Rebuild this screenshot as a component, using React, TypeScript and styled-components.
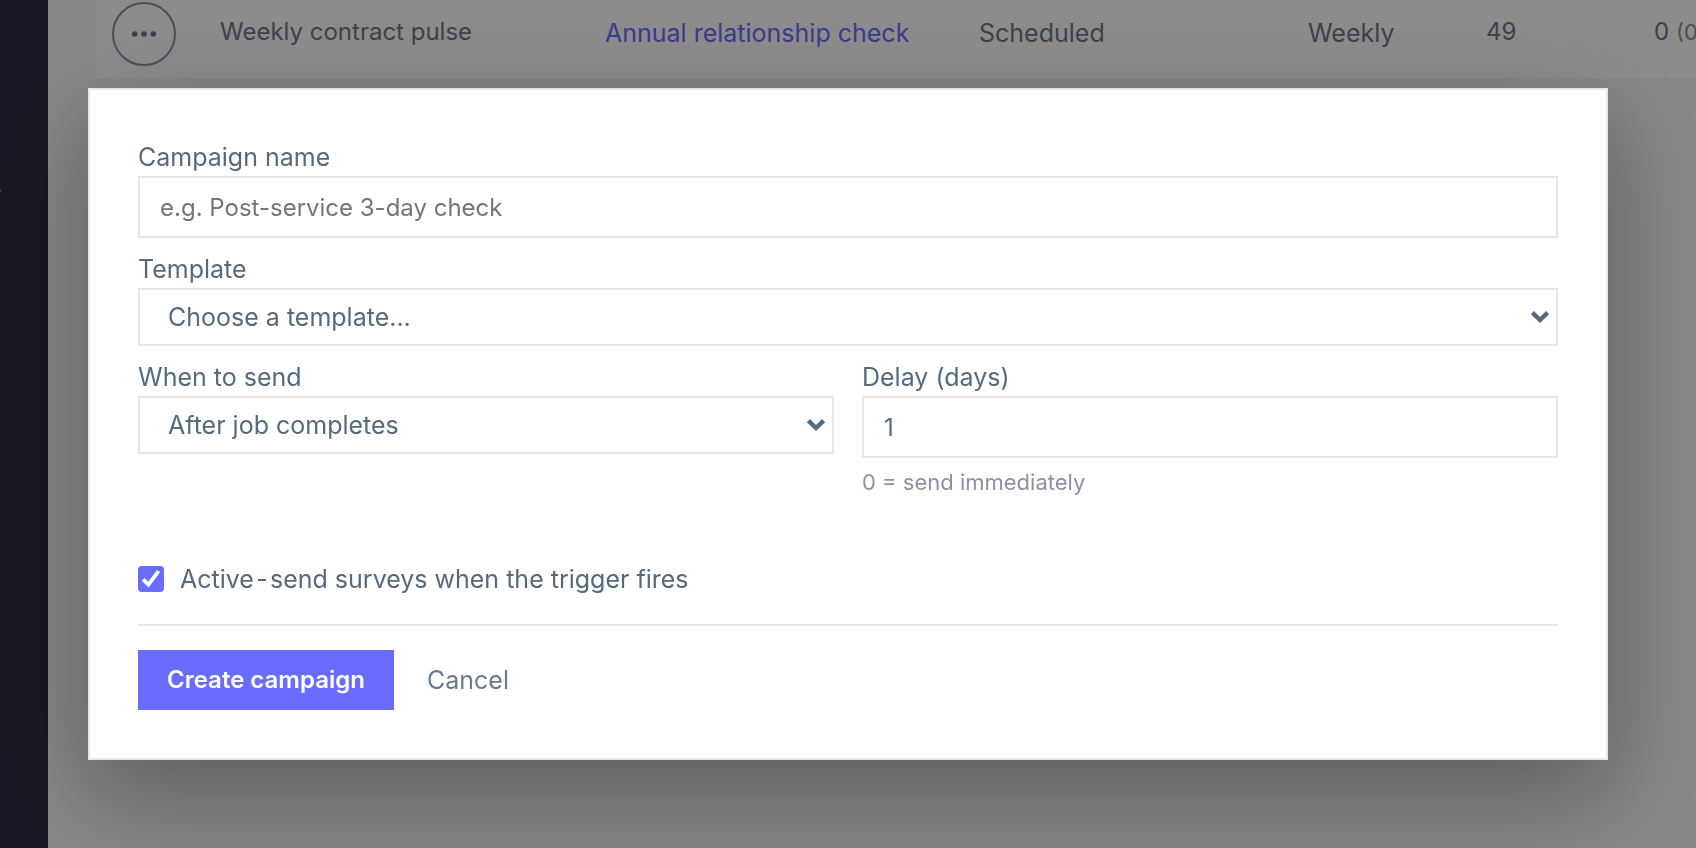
import React, { useState } from "react";
import styled, { createGlobalStyle } from "styled-components";

const GlobalStyle = createGlobalStyle`
  *, *::before, *::after { box-sizing: border-box; }
  body {
    margin: 0;
    overflow: hidden;
    background: #f5f5f9;
    color: #566a7f;
    font: 400 25px/38px Inter, "Liberation Sans", sans-serif;
  }
  button, input, select { font: inherit; color: inherit; }
`;

const Shell = styled.div`
  display: flex;
  min-height: 100vh;
`;

const Sidebar = styled.aside`
  flex: none;
  width: 48px;
  padding-top: 184px;
  overflow: hidden;
  background: #2b2c40;
  color: #7f8097;

  svg { display: block; margin-left: -12px; }
`;

const Main = styled.main`
  flex: 1;
  min-width: 0;
  padding-left: 48px;
  overflow: hidden;
`;

const CampaignTable = styled.table`
  width: 1800px;
  table-layout: fixed;
  border-collapse: collapse;
  background: #fff;
  color: #697a8d;
`;

const Cell = styled.td<{ $lift?: number }>`
  height: 78px;
  padding: 0 0 ${(p) => p.$lift ?? 12}px 16px;
  vertical-align: middle;
  white-space: nowrap;
`;

const SmallCell = styled(Cell)`
  font-size: 24px;
`;

const Share = styled.span`
  font-size: 22px;
  color: #8592a3;
`;

const TemplateLink = styled.a`
  color: #696cff;
  text-decoration: none;
`;

const MoreButton = styled.button`
  display: grid;
  place-items: center;
  width: 64px;
  height: 64px;
  padding: 0;
  border: 2px solid #8592a3;
  border-radius: 50%;
  background: none;
  color: #697a8d;
`;

const Backdrop = styled.div`
  position: fixed;
  inset: 0;
  display: flex;
  align-items: center;
  padding: 0 88px;
  background: rgba(0, 0, 0, 0.45);
`;

const Dialog = styled.form`
  flex: 1;
  min-width: 0;
  padding: 48px;
  border: 2px solid #e7e7e8;
  background: #fff;
  box-shadow: 0 32px 96px rgba(0, 0, 0, 0.32);
`;

const Field = styled.div`
  display: flex;
  flex-direction: column;
  margin-bottom: 12px;
`;

const FieldPair = styled.div`
  display: grid;
  grid-template-columns: 1fr 1fr;
  gap: 28px;
  align-items: start;
`;

const TextInput = styled.input`
  width: 100%;
  height: 62px;
  padding: 0 20px;
  border: 2px solid #e7e7e8;
  border-radius: 0;
  background: #fff;
  font-size: 24px;
  appearance: textfield;

  &::placeholder { color: #757575; opacity: 1; }
  &::-webkit-inner-spin-button { appearance: none; margin: 0; }
`;

const SelectWrap = styled.div`
  position: relative;

  svg {
    position: absolute;
    top: 22px;
    right: 8px;
    pointer-events: none;
  }
`;

const SelectInput = styled.select`
  display: block;
  width: 100%;
  height: 58px;
  padding: 0 48px 0 28px;
  border: 2px solid #e7e7e8;
  border-radius: 0;
  background: #fff;
  appearance: none;
`;

const Hint = styled.small`
  margin-top: 8px;
  font-size: 22px;
  line-height: 32px;
  color: #8a93a5;
`;

const ActiveRow = styled.label`
  display: flex;
  align-items: center;
  gap: 16px;
  margin: 50px 0 26px;
`;

const CheckBox = styled.span`
  position: relative;
  width: 26px;
  height: 26px;

  svg {
    position: absolute;
    inset: 0;
    pointer-events: none;
  }
`;

const CheckInput = styled.input`
  display: block;
  width: 26px;
  height: 26px;
  margin: 0;
  border: 2px solid #d9dee3;
  border-radius: 4px;
  appearance: none;

  &:checked { border-color: #696cff; background: #696cff; }
`;

const Footer = styled.footer`
  display: flex;
  gap: 4px;
  padding-top: 24px;
  border-top: 2px solid #e7e7e8;
`;

const Button = styled.button<{ $primary?: boolean }>`
  height: 60px;
  padding: 0 29px;
  border: 0;
  background: ${(p) => (p.$primary ? "#696cff" : "none")};
  color: ${(p) => (p.$primary ? "#fff" : "#697a8d")};
  font-size: ${(p) => (p.$primary ? 24 : 25)}px;
  font-weight: ${(p) => (p.$primary ? 600 : 400)};
`;

const Chevron = () => (
  <svg width="20" height="14" viewBox="0 0 20 14" fill="none" stroke="#566a7f" strokeWidth="4.4" aria-hidden="true">
    <path d="M2.4 2.6l7.6 7.4 7.6-7.4" />
  </svg>
);

export default function App() {
  const [active, setActive] = useState(true);

  return (
    <>
      <GlobalStyle />
      <Shell>
        <Sidebar>
          <svg width="14" height="14" viewBox="0 0 14 14" fill="none" stroke="currentColor" strokeWidth="2" aria-hidden="true">
            <path d="M2 6l5 5 6-5" />
          </svg>
        </Sidebar>
        <Main>
          <CampaignTable>
            <colgroup>
              {[108, 385, 374, 329, 178, 168].map((width, i) => (
                <col key={i} width={width} />
              ))}
              <col />
            </colgroup>
            <tbody>
              <tr>
                <Cell $lift={10}>
                  <MoreButton type="button" aria-label="Campaign actions">
                    <svg width="26" height="8" viewBox="0 0 26 8" fill="currentColor" aria-hidden="true">
                      <circle cx="3.7" cy="4" r="2.8" />
                      <circle cx="13" cy="4" r="2.8" />
                      <circle cx="22.3" cy="4" r="2.8" />
                    </svg>
                  </MoreButton>
                </Cell>
                <SmallCell $lift={14}>Weekly contract pulse</SmallCell>
                <Cell>
                  <TemplateLink href="#template">Annual relationship check</TemplateLink>
                </Cell>
                <Cell>Scheduled</Cell>
                <Cell>Weekly</Cell>
                <SmallCell $lift={14}>49</SmallCell>
                <SmallCell $lift={14}>
                  0 <Share>(0%)</Share>
                </SmallCell>
              </tr>
            </tbody>
          </CampaignTable>
        </Main>
      </Shell>

      <Backdrop>
        <Dialog role="dialog" aria-label="New campaign" onSubmit={(e) => e.preventDefault()}>
          <Field>
            <label htmlFor="name">Campaign name</label>
            <TextInput id="name" type="text" placeholder="e.g. Post-service 3-day check" />
          </Field>
          <Field>
            <label htmlFor="template">Template</label>
            <SelectWrap>
              <SelectInput id="template">
                <option>Choose a template...</option>
              </SelectInput>
              <Chevron />
            </SelectWrap>
          </Field>
          <FieldPair>
            <Field>
              <label htmlFor="trigger">When to send</label>
              <SelectWrap>
                <SelectInput id="trigger">
                  <option>After job completes</option>
                </SelectInput>
                <Chevron />
              </SelectWrap>
            </Field>
            <Field>
              <label htmlFor="delay">Delay (days)</label>
              <TextInput id="delay" type="number" min={0} defaultValue={1} aria-describedby="delay-hint" />
              <Hint id="delay-hint">0 = send immediately</Hint>
            </Field>
          </FieldPair>
          <ActiveRow>
            <CheckBox>
              <CheckInput type="checkbox" checked={active} onChange={(e) => setActive(e.target.checked)} />
              {active && (
                <svg width="26" height="26" viewBox="0 0 26 26" fill="none" stroke="#fff" strokeWidth="3.8" aria-hidden="true">
                  <path d="M5 13.4l5.4 5.2L20.6 5.2" />
                </svg>
              )}
            </CheckBox>
            <span>Active{"\u200A"}-{"\u200A"}send surveys when the trigger fires</span>
          </ActiveRow>
          <Footer>
            <Button type="submit" $primary>Create campaign</Button>
            <Button type="button">Cancel</Button>
          </Footer>
        </Dialog>
      </Backdrop>
    </>
  );
}
